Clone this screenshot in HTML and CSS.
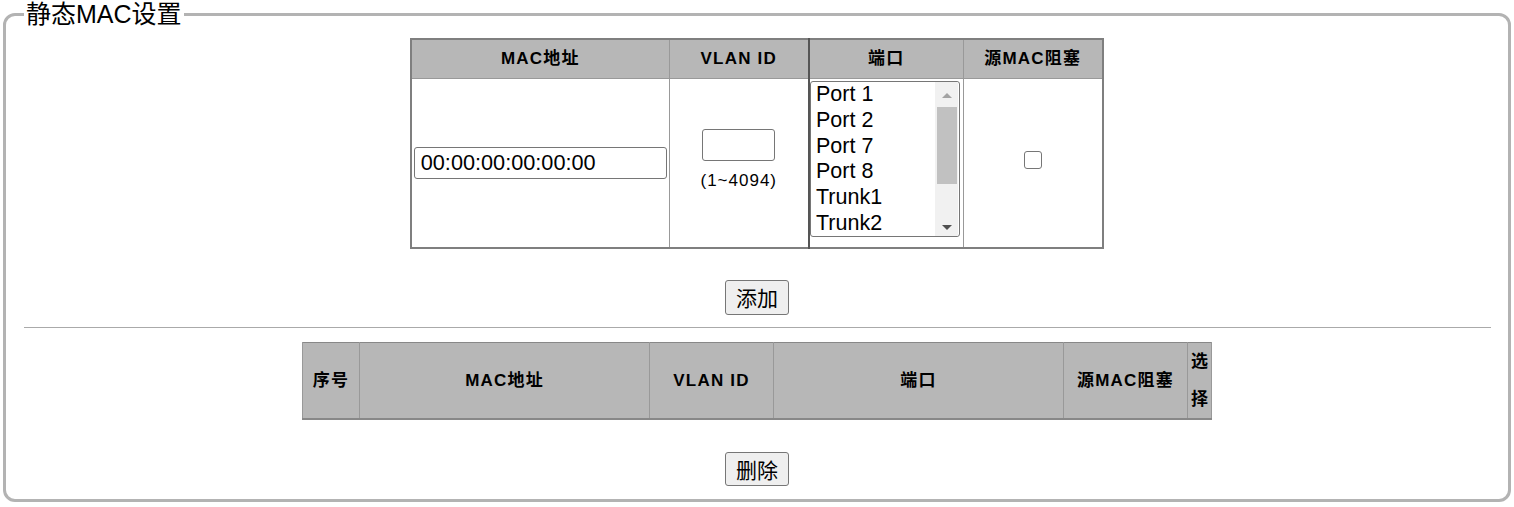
FILE: index.html
```html
<!DOCTYPE html>
<html lang="zh">
<head>
<meta charset="utf-8">
<title>静态MAC设置</title>
<link rel="stylesheet" href="styles.css">
</head>
<body>
<fieldset class="panel">
  <legend class="panel-title">静态MAC设置</legend>

  <table class="tbl-set">
    <colgroup>
      <col class="c-mac">
      <col class="c-vlan">
      <col class="c-port">
      <col class="c-block">
    </colgroup>
    <thead>
      <tr>
        <th>MAC地址</th>
        <th>VLAN ID</th>
        <th class="sep-dark">端口</th>
        <th>源MAC阻塞</th>
      </tr>
    </thead>
    <tbody>
      <tr>
        <td><input class="inp-mac" type="text" value="00:00:00:00:00:00"></td>
        <td>
          <div class="vlan-box">
            <input class="inp-vlan" type="text" value="">
            <span class="hint">(1~4094)</span>
          </div>
        </td>
        <td class="sep-dark cell-port">
          <div class="listbox">
            <select class="sel-port" multiple size="6">
              <option>Port 1</option>
              <option>Port 2</option>
              <option>Port 7</option>
              <option>Port 8</option>
              <option>Trunk1</option>
              <option>Trunk2</option>
              <option>Trunk3</option>
              <option>Trunk4</option>
              <option>Trunk5</option>
              <option>Trunk6</option>
            </select>
            <div class="fake-scroll" aria-hidden="true">
              <div class="sb-btn"><span class="arr-up"></span></div>
              <div class="sb-track"><div class="sb-thumb"></div></div>
              <div class="sb-btn"><span class="arr-down"></span></div>
            </div>
          </div>
        </td>
        <td><input class="chk" type="checkbox"></td>
      </tr>
    </tbody>
  </table>

  <div class="actions actions-add">
    <button class="btn" type="button">添加</button>
  </div>

  <hr class="divider">

  <table class="tbl-list">
    <colgroup>
      <col class="l-no">
      <col class="l-mac">
      <col class="l-vlan">
      <col class="l-port">
      <col class="l-block">
      <col class="l-sel">
    </colgroup>
    <thead>
      <tr>
        <th>序号</th>
        <th>MAC地址</th>
        <th class="sep-dark">VLAN ID</th>
        <th>端口</th>
        <th class="sep-dark">源MAC阻塞</th>
        <th class="sel-col">选择</th>
      </tr>
    </thead>
  </table>

  <div class="actions actions-del">
    <button class="btn" type="button">删除</button>
  </div>
</fieldset>
</body>
</html>
```

FILE: styles.css
```css
html, body {
  margin: 0;
  padding: 0;
  background: #ffffff;
}

body {
  font-family: "Liberation Sans", "Noto Sans CJK SC", Arial, sans-serif;
  color: #000;
}

.panel {
  margin: 0 3px;
  padding: 0 0 13px 0;
  border: 3px solid #b3b3b3;
  border-radius: 12px;
  min-width: 0;
}

.panel-title {
  margin-left: 18px;
  padding: 0 2px;
  font-size: 25px;
  line-height: 28px;
  color: #000;
}

/* ---------- top entry table ---------- */
.tbl-set {
  border-collapse: collapse;
  table-layout: fixed;
  width: 692px;
  margin: 10px auto 0;
  border: 2px solid #7f7f7f;
}

.c-mac { width: 258px; }
.c-vlan { width: 140px; }
.c-port { width: 154px; }
.c-block { width: 140px; }

.tbl-set th {
  background: #b7b7b7;
  border: 1px solid #999;
  padding: 0;
  height: 38px;
  font-size: 17px;
  font-weight: bold;
  letter-spacing: 1.2px;
  line-height: 20px;
  text-align: center;
}

.tbl-set td {
  border: 1px solid #999;
  padding: 0;
  height: 166px;
  text-align: center;
  vertical-align: middle;
}

.tbl-set .sep-dark {
  border-left: 2px solid #555;
}

.tbl-set td.cell-port {
  vertical-align: top;
  padding-top: 2px;
  text-align: left;
}

.inp-mac {
  box-sizing: border-box;
  width: 253px;
  height: 32px;
  margin: 0;
  padding: 0 6px;
  border: 1px solid #767676;
  border-radius: 3px;
  font-family: "Liberation Sans", Arial, sans-serif;
  font-size: 21.7px;
  color: #000;
}

.vlan-box {
  display: flex;
  flex-direction: column;
  align-items: center;
  gap: 10px;
  padding-bottom: 7px;
}

.inp-vlan {
  box-sizing: border-box;
  width: 73px;
  height: 32px;
  margin: 0;
  padding: 0 4px;
  border: 1px solid #767676;
  border-radius: 3px;
  font-family: "Liberation Sans", Arial, sans-serif;
  font-size: 21.7px;
}

.hint {
  font-size: 17px;
  line-height: 20px;
  letter-spacing: 1px;
}

.listbox {
  position: relative;
  width: 150px;
  height: 156px;
}

.sel-port {
  display: block;
  box-sizing: border-box;
  width: 150px;
  height: 156px;
  margin: 0;
  padding: 0;
  border: 1px solid #767676;
  border-radius: 3px;
  font-family: "Liberation Sans", Arial, sans-serif;
  font-size: 21.5px;
  color: #000;
  background: #fff;
  scrollbar-width: none;
  overflow: hidden;
}

.sel-port option {
  padding: 0 5px 0;
  line-height: 25.5px;
  height: 25.5px;
}

.fake-scroll {
  position: absolute;
  top: 1px;
  bottom: 1px;
  right: 2px;
  width: 23px;
  display: flex;
  flex-direction: column;
  background: #f1f1f1;
}

.sb-btn {
  height: 24px;
  display: flex;
  align-items: center;
  justify-content: center;
}

.sb-track {
  flex: 1;
  padding: 1px 1px 0 2px;
}

.sb-thumb {
  height: 77px;
  background: #c1c1c1;
}

.arr-up {
  width: 0;
  height: 0;
  border-left: 5px solid transparent;
  border-right: 5px solid transparent;
  border-bottom: 5px solid #a3a3a3;
  margin-top: 2px;
}

.arr-down {
  width: 0;
  height: 0;
  border-left: 5px solid transparent;
  border-right: 5px solid transparent;
  border-top: 5px solid #505050;
  margin-top: 6px;
}

.chk {
  -webkit-appearance: none;
  appearance: none;
  box-sizing: border-box;
  width: 18px;
  height: 18px;
  margin: 0 0 7px 0;
  border: 1px solid #767676;
  border-radius: 3px;
  background: #fff;
  vertical-align: middle;
}

/* ---------- buttons ---------- */
.actions {
  text-align: center;
}

.actions-add {
  margin-top: 31px;
}

.actions-del {
  margin-top: 32px;
}

.btn {
  box-sizing: border-box;
  height: 35px;
  padding: 0 10px;
  border: 1px solid #767676;
  border-radius: 3px;
  background: #efefef;
  font-family: "Noto Sans CJK SC", sans-serif;
  font-size: 21px;
  line-height: 31px;
  color: #000;
  vertical-align: top;
}

.actions-del .btn {
  height: 34px;
}

.divider {
  margin: 12px 17px 0 18px;
  height: 0;
  border: 0;
  border-top: 1px solid #aaaaaa;
}

/* ---------- list table ---------- */
.tbl-list {
  border-collapse: collapse;
  table-layout: fixed;
  width: 909px;
  margin: 14px auto 0;
  border-top: 1px solid #888;
  border-bottom: 2px solid #888;
  border-left: 1px solid #999;
  border-right: 1px solid #999;
}

.l-no { width: 57px; }
.l-mac { width: 290px; }
.l-vlan { width: 124px; }
.l-port { width: 290px; }
.l-block { width: 124px; }
.l-sel { width: 24px; }

.tbl-list th {
  background: #b7b7b7;
  border-left: 1px solid #999;
  border-right: 1px solid #999;
  padding: 0;
  font-size: 17px;
  font-weight: bold;
  letter-spacing: 1.2px;
  line-height: 37.5px;
  text-align: center;
}

.tbl-list th.sep-dark {
  border-left: 1px solid #333;
}

.tbl-list th.sel-col {
  letter-spacing: 0;
  word-break: break-all;
}
```
